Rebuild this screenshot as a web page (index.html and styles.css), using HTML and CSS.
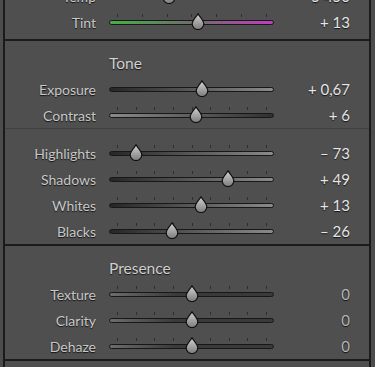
FILE: index.html
```html
<!DOCTYPE html>
<html lang="en">
  <head>
    <meta charset="UTF-8" />
    <meta name="viewport" content="width=device-width, initial-scale=1.0" />
    <title>Basic</title>
    <link rel="stylesheet" href="styles.css">
  </head>
  <body>
    <svg class="defs" width="0" height="0">
      <defs>
        <linearGradient id="knobFill" x1="0" y1="0" x2="0" y2="1">
          <stop offset="0" stop-color="#d2d2d2" />
          <stop offset="1" stop-color="#7c7c7c" />
        </linearGradient>
        <symbol id="knob" viewBox="0 0 14 17">
          <path d="M7 0.9 C8 2.6 12.8 7.4 12.8 10.8 A5.8 5.8 0 0 1 1.2 10.8 C1.2 7.4 6 2.6 7 0.9 Z" fill="url(#knobFill)" stroke="#101010" stroke-width="1.2" />
        </symbol>
      </defs>
    </svg>
    <div class="panel">
      <div class="section wb">
        <div id="wbList"></div>
      </div>
      <div class="section tone">
        <h2 class="section-title">Tone</h2>
        <div id="toneList"></div>
        <div class="divider"></div>
        <div id="rangeList"></div>
      </div>
      <div class="section presence">
        <h2 class="section-title">Presence</h2>
        <div id="presenceList"></div>
      </div>
    </div>
    <script>
      const lists = {
        wbList: [
          { name: "Temp", value: "5 450", pos: 0.35, ticks: 7, track: "temp" },
          { name: "Tint", value: "+ 13", pos: 0.543, ticks: 7, track: "tint" },
        ],
        toneList: [
          { name: "Exposure", value: "+ 0,67", pos: 0.567, ticks: 0, track: "dark-light" },
          { name: "Contrast", value: "+ 6", pos: 0.53, ticks: 9, track: "light-dark" },
        ],
        rangeList: [
          { name: "Highlights", value: "– 73", pos: 0.135, ticks: 9, track: "dark-light" },
          { name: "Shadows", value: "+ 49", pos: 0.745, ticks: 9, track: "dark-light" },
          { name: "Whites", value: "+ 13", pos: 0.565, ticks: 9, track: "dark-light" },
          { name: "Blacks", value: "– 26", pos: 0.37, ticks: 9, track: "dark-light" },
        ],
        presenceList: [
          { name: "Texture", value: "0", pos: 0.5, ticks: 9, track: "plain" },
          { name: "Clarity", value: "0", pos: 0.5, ticks: 9, track: "plain" },
          { name: "Dehaze", value: "0", pos: 0.5, ticks: 9, track: "plain" },
        ],
      };

      const SliderRow = (row) => {
        let ticks = "";
        for (let i = 0; i < row.ticks; i++) {
          ticks += "<i></i>";
        }
        return `
          <div class="row">
            <span class="label">${row.name}</span>
            <div class="slider">
              <div class="ticks">${ticks}</div>
              <div class="track ${row.track}"></div>
              <svg class="thumb" style="left: calc(${row.pos} * (100% - 14px))"><use href="#knob" /></svg>
            </div>
            <span class="value ${row.value === "0" ? "zero" : ""}">${row.value}</span>
          </div>
        `;
      };

      for (const id in lists) {
        let html = "";
        for (let i = 0; i < lists[id].length; i++) {
          html += SliderRow(lists[id][i]);
        }
        document.getElementById(id).innerHTML = html;
      }
    </script>
  </body>
</html>
```

FILE: styles.css
```css
* {
  margin: 0;
  padding: 0;
  box-sizing: border-box;
}

body {
  background: #4c4c4c;
  font-family: Lato, "Open Sans", sans-serif;
  height: 367px;
  overflow: hidden;
}

.defs {
  position: absolute;
}

.panel {
  margin-left: 3px;
  width: 368px;
  min-height: calc(100vh + 17px);
  background: #4f4f4f;
  border-left: 2px solid #1b1b1b;
  border-right: 2px solid #1b1b1b;
}

.section {
  border-bottom: 2px solid #1b1b1b;
}

.wb {
  margin-top: -17px;
  padding-bottom: 4px;
}

.tone,
.presence {
  padding-top: 9px;
}

.section-title {
  height: 26px;
  line-height: 26px;
  padding-left: 104px;
  font-size: 15.5px;
  font-weight: normal;
  color: #d0d0d0;
  text-shadow: 0 1px 1px #151515;
}

.divider {
  height: 1px;
  background: #414141;
  margin-bottom: 11px;
}

.row {
  display: grid;
  grid-template-columns: 91px 165px 1fr;
  column-gap: 13px;
  height: 26px;
  align-items: center;
}

.label {
  text-align: right;
  font-size: 14px;
  color: #c8c8c8;
  text-shadow: 0 1px 1px #111;
}

.value {
  text-align: right;
  padding-right: 19px;
  font-size: 15px;
  color: #e6e6e6;
  text-shadow: 0 1px 1px #111;
}

.value.zero {
  color: #b4b4b4;
}

.slider {
  position: relative;
  height: 26px;
  display: flex;
  flex-direction: column;
  justify-content: center;
  padding-bottom: 6px;
}

.ticks {
  display: flex;
  justify-content: space-between;
  height: 3px;
  margin-bottom: 3px;
  padding: 0 7px 0 8px;
}

.ticks i {
  width: 1px;
  height: 3px;
  background: #2e2e2e;
}

.track {
  height: 5px;
  border: 1px solid #181818;
  border-radius: 3px;
}

.temp {
  background: linear-gradient(to right, #3b6fc4, #6a6a6a 50%, #c9b23a);
}

.tint {
  background: linear-gradient(to right, #43b043, #6e6e6e 50%, #c03cc0);
}

.dark-light {
  background: linear-gradient(to right, #262626, #8a8a8a);
}

.light-dark {
  background: linear-gradient(to right, #8a8a8a, #303030);
}

.plain {
  background: linear-gradient(to right, #6c6c6c, #3a3a3a 40%, #3a3a3a);
}

.thumb {
  position: absolute;
  top: 4px;
  width: 14px;
  height: 17px;
}
```
